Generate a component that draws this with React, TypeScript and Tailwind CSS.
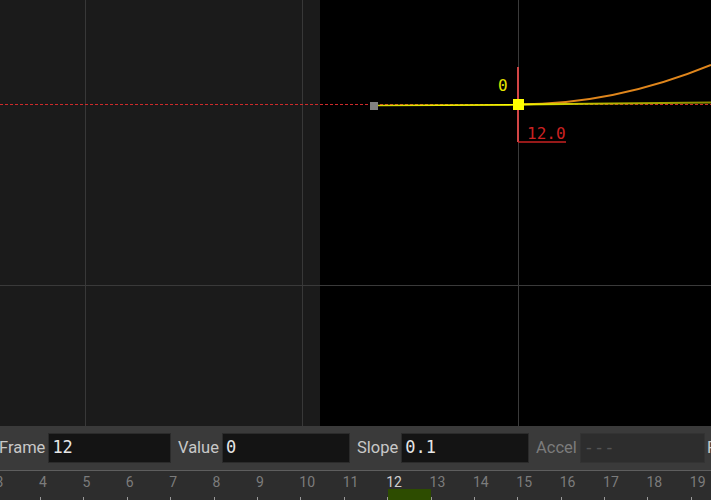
import * as React from "react"

const mono = { fontFamily: '"DejaVu Sans Mono", "Liberation Mono", monospace' }
const sans = { fontFamily: 'Roboto, "Noto Sans", sans-serif' }

const frames = [3, 4, 5, 6, 7, 8, 9, 10, 11, 12, 13, 14, 15, 16, 17, 18, 19, 20]

function GraphCanvas() {
    return (
        <div className="relative h-[426px] flex overflow-hidden">
            <div className="w-[320px] shrink-0 bg-[#1b1b1b]" />
            <div className="flex-1 bg-black" />
            <svg className="absolute inset-0" width="711" height="426" viewBox="0 0 711 426">
                <defs>
                    <linearGradient id="flat" x1="518" y1="0" x2="711" y2="0" gradientUnits="userSpaceOnUse">
                        <stop offset="0" stopColor="#ffff00" />
                        <stop offset="0.25" stopColor="#c8c800" />
                        <stop offset="1" stopColor="#8a8a00" />
                    </linearGradient>
                    <linearGradient id="lead" x1="374" y1="0" x2="518" y2="0" gradientUnits="userSpaceOnUse">
                        <stop offset="0" stopColor="#d8d800" />
                        <stop offset="1" stopColor="#ffff00" />
                    </linearGradient>
                </defs>
                {/* grid */}
                <line x1="85.5" y1="0" x2="85.5" y2="426" stroke="#383838" strokeWidth="1" />
                <line x1="302.5" y1="0" x2="302.5" y2="426" stroke="#383838" strokeWidth="1" />
                <line x1="518.5" y1="0" x2="518.5" y2="426" stroke="#3a3a3a" strokeWidth="1" />
                <line x1="0" y1="285.5" x2="711" y2="285.5" stroke="#3a3a3a" strokeWidth="1" />

                {/* previous segment (dashed) */}
                <line x1="0" y1="104.5" x2="711" y2="104.5" stroke="#d02a2a" strokeWidth="1" strokeDasharray="3 2" />

                {/* curves */}
                <path d="M374 105.5 L518 104.8" stroke="url(#lead)" strokeWidth="1.6" fill="none" />
                <path d="M518 104.5 Q614.5 104.5 711 65" stroke="#e0861c" strokeWidth="2" fill="none" />
                <path d="M518 104.5 L711 102.5" stroke="url(#flat)" strokeWidth="2" fill="none" />

                {/* handle */}
                <rect x="370" y="102" width="8" height="8" fill="#808080" />

                {/* key marker */}
                <rect x="517" y="67" width="2" height="75" fill="#d24646" />
                <line x1="518" y1="142" x2="566" y2="142" stroke="#c82222" strokeWidth="1.5" />
                <rect x="513" y="99" width="11" height="11" fill="#ffff00" />
            </svg>
            <span className="absolute left-[498px] top-[76px] text-[16px] leading-5 text-[#e6e600]" style={mono}>0</span>
            <span className="absolute left-[527px] top-[124px] text-[16px] leading-5 text-[#cc2222]" style={mono}>12.0</span>
        </div>
    )
}

function Field({ label, value, width, dim, first }: { label: string; value: string; width: string; dim?: boolean; first?: boolean }) {
    return (
        <div className={`flex items-center gap-[3px] shrink-0 ${width} ${first ? "ml-[-1px]" : ""}`}>
            <span className={`text-[16.5px] shrink-0 ${dim ? "text-[#7c7c7c]" : "text-[#c8c8c8]"}`} style={sans}>{label}</span>
            <div
                className={`flex-1 h-[30px] flex items-center px-[3px] border ${dim ? "bg-[#2d2d2d] border-[#333333] text-[#555555]" : "bg-[#141414] border-[#2b2b2b] text-[#e6e6e6]"}`}
            >
                <span className="text-[17px]" style={mono}>{value}</span>
            </div>
        </div>
    )
}

function Toolbar() {
    return (
        <div className="h-[44px] bg-[#3a3a3a] flex items-center gap-[7px] overflow-hidden">
            <Field label="Frame" value="12" width="w-[172px]" first />
            <Field label="Value" value="0" width="w-[172px]" />
            <Field label="Slope" value="0.1" width="w-[172px]" />
            <Field label="Accel" value="---" width="w-[169px]" dim />
            <span className="ml-[-5px] text-[16.5px] text-[#c8c8c8] shrink-0" style={sans}>Flags</span>
        </div>
    )
}

function Ruler() {
    return (
        <div className="h-[30px] bg-[#2d2d2d] border-t border-[#5e5e5e] flex overflow-hidden">
            <div className="flex ml-[-3.4px]">
                {frames.map((n) => (
                    <div key={n} className="relative w-[43.4px] h-full shrink-0">
                        {n === 12 && <div className="absolute left-[1px] bottom-0 w-[43px] h-[11px] bg-[#2d4c00]" />}
                        <span
                            className={`absolute left-[-1px] top-[3px] text-[14px] leading-4 ${n === 12 ? "text-[#cfcfcf]" : "text-[#7c7c7c]"}`}
                            style={sans}
                        >
                            {n}
                        </span>
                        <div className="absolute left-0 bottom-0 w-px h-[3px] bg-[#9a9a9a]" />
                    </div>
                ))}
            </div>
        </div>
    )
}

export default function App() {
    return (
        <div className="w-[711px] h-[500px] bg-black overflow-hidden select-none">
            <GraphCanvas />
            <Toolbar />
            <Ruler />
        </div>
    )
}
